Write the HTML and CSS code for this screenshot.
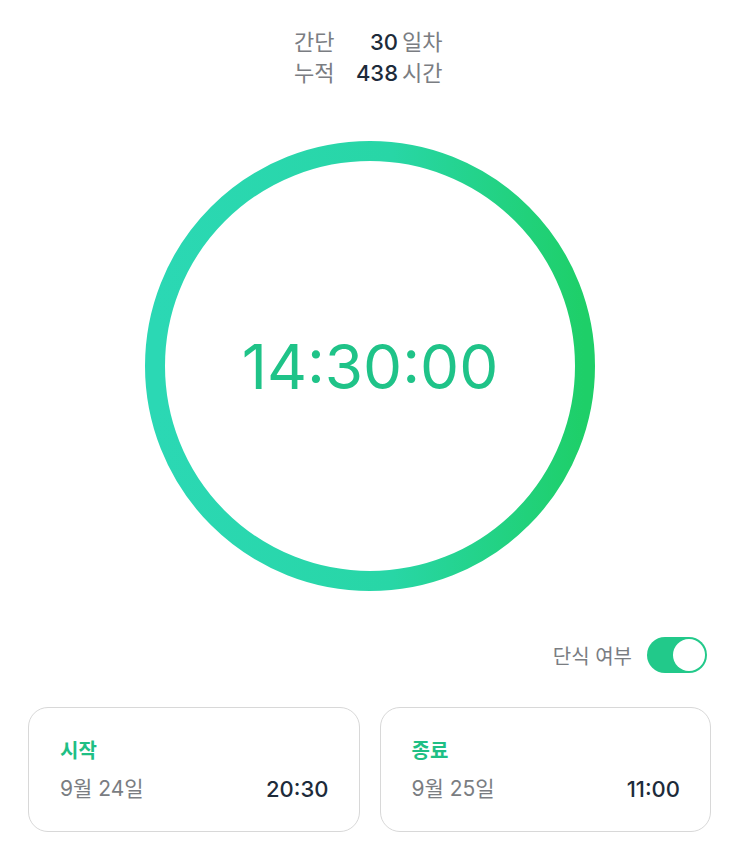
FILE: index.html
```html
<!DOCTYPE html>
<html lang="ko">
<head>
    <meta charset="UTF-8">
    <meta name="viewport" content="width=device-width, initial-scale=1.0">
    <title>단식 타이머</title>
    <link rel="stylesheet" href="styles.css">
</head>
<body>
    <div class="stats">
        <div class="stat-row">
            <span class="stat-label">간단</span>
            <span class="stat-value">30</span>
            <span class="stat-unit">일차</span>
        </div>
        <div class="stat-row">
            <span class="stat-label">누적</span>
            <span class="stat-value">438</span>
            <span class="stat-unit">시간</span>
        </div>
    </div>

    <div class="timer">
        <svg class="ring" width="450" height="450" viewBox="0 0 450 450">
            <defs>
                <linearGradient id="ringGrad" x1="0" y1="0" x2="1" y2="0">
                    <stop offset="0%" stop-color="#2bd8b4"/>
                    <stop offset="55%" stop-color="#28d6a6"/>
                    <stop offset="100%" stop-color="#1ecf68"/>
                </linearGradient>
            </defs>
            <circle cx="225" cy="225" r="215" fill="none" stroke="url(#ringGrad)" stroke-width="20"/>
        </svg>
        <div class="time">14:30:00</div>
    </div>

    <div class="fast-toggle">
        <span class="toggle-label">단식 여부</span>
        <div class="switch on"><div class="knob"></div></div>
    </div>

    <div class="cards">
        <div class="card">
            <div class="card-title">시작</div>
            <div class="card-row">
                <span class="card-date">9월 24일</span>
                <span class="card-time">20:30</span>
            </div>
        </div>
        <div class="card">
            <div class="card-title">종료</div>
            <div class="card-row">
                <span class="card-date">9월 25일</span>
                <span class="card-time">11:00</span>
            </div>
        </div>
    </div>
</body>
</html>
```

FILE: styles.css
```css
body {
    margin: 0;
    background: #fff;
    font-family: "Inter", "Noto Sans CJK KR", sans-serif;
    color: #1d2b3a;
}
.stats {
    padding-top: 27px;
    display: flex;
    flex-direction: column;
    align-items: center;
}
.stat-row {
    display: grid;
    grid-template-columns: 44px 64px 44px;
    font-size: 22px;
    line-height: 31px;
}
.stat-label,
.stat-unit {
    color: #7a7d82;
}
.stat-value {
    text-align: right;
    padding-right: 4px;
    color: #1d2b3a;
    font-weight: 500;
}
.timer {
    position: relative;
    width: 450px;
    height: 450px;
    margin: 52px auto 0;
}
.ring {
    display: block;
}
.time {
    position: absolute;
    inset: 0;
    display: flex;
    align-items: center;
    justify-content: center;
    font-size: 62px;
    color: #1fc388;
}
.fast-toggle {
    display: flex;
    justify-content: flex-end;
    align-items: center;
    gap: 15px;
    margin-top: 46px;
    padding-right: 33px;
}
.toggle-label {
    font-size: 20px;
    color: #7a7d82;
}
.switch {
    width: 60px;
    height: 36px;
    border-radius: 18px;
    background: #22c98a;
    position: relative;
}
.knob {
    position: absolute;
    top: 2px;
    right: 2px;
    width: 32px;
    height: 32px;
    border-radius: 50%;
    background: #fff;
}
.cards {
    display: flex;
    gap: 20px;
    margin-top: 34px;
    padding: 0 29px 0 28px;
}
.card {
    flex: 1;
    height: 125px;
    box-sizing: border-box;
    border: 1.5px solid #d8d8d8;
    border-radius: 20px;
    padding: 28px 30px 0 31px;
}
.card-title {
    font-size: 20px;
    font-weight: 600;
    color: #1fbf85;
    line-height: 30px;
}
.card-row {
    display: flex;
    justify-content: space-between;
    align-items: center;
    margin-top: 8px;
    line-height: 30px;
}
.card-date {
    font-size: 21px;
    color: #7a7d82;
}
.card-time {
    font-size: 22px;
    font-weight: 500;
    color: #1d2b3a;
}
```
